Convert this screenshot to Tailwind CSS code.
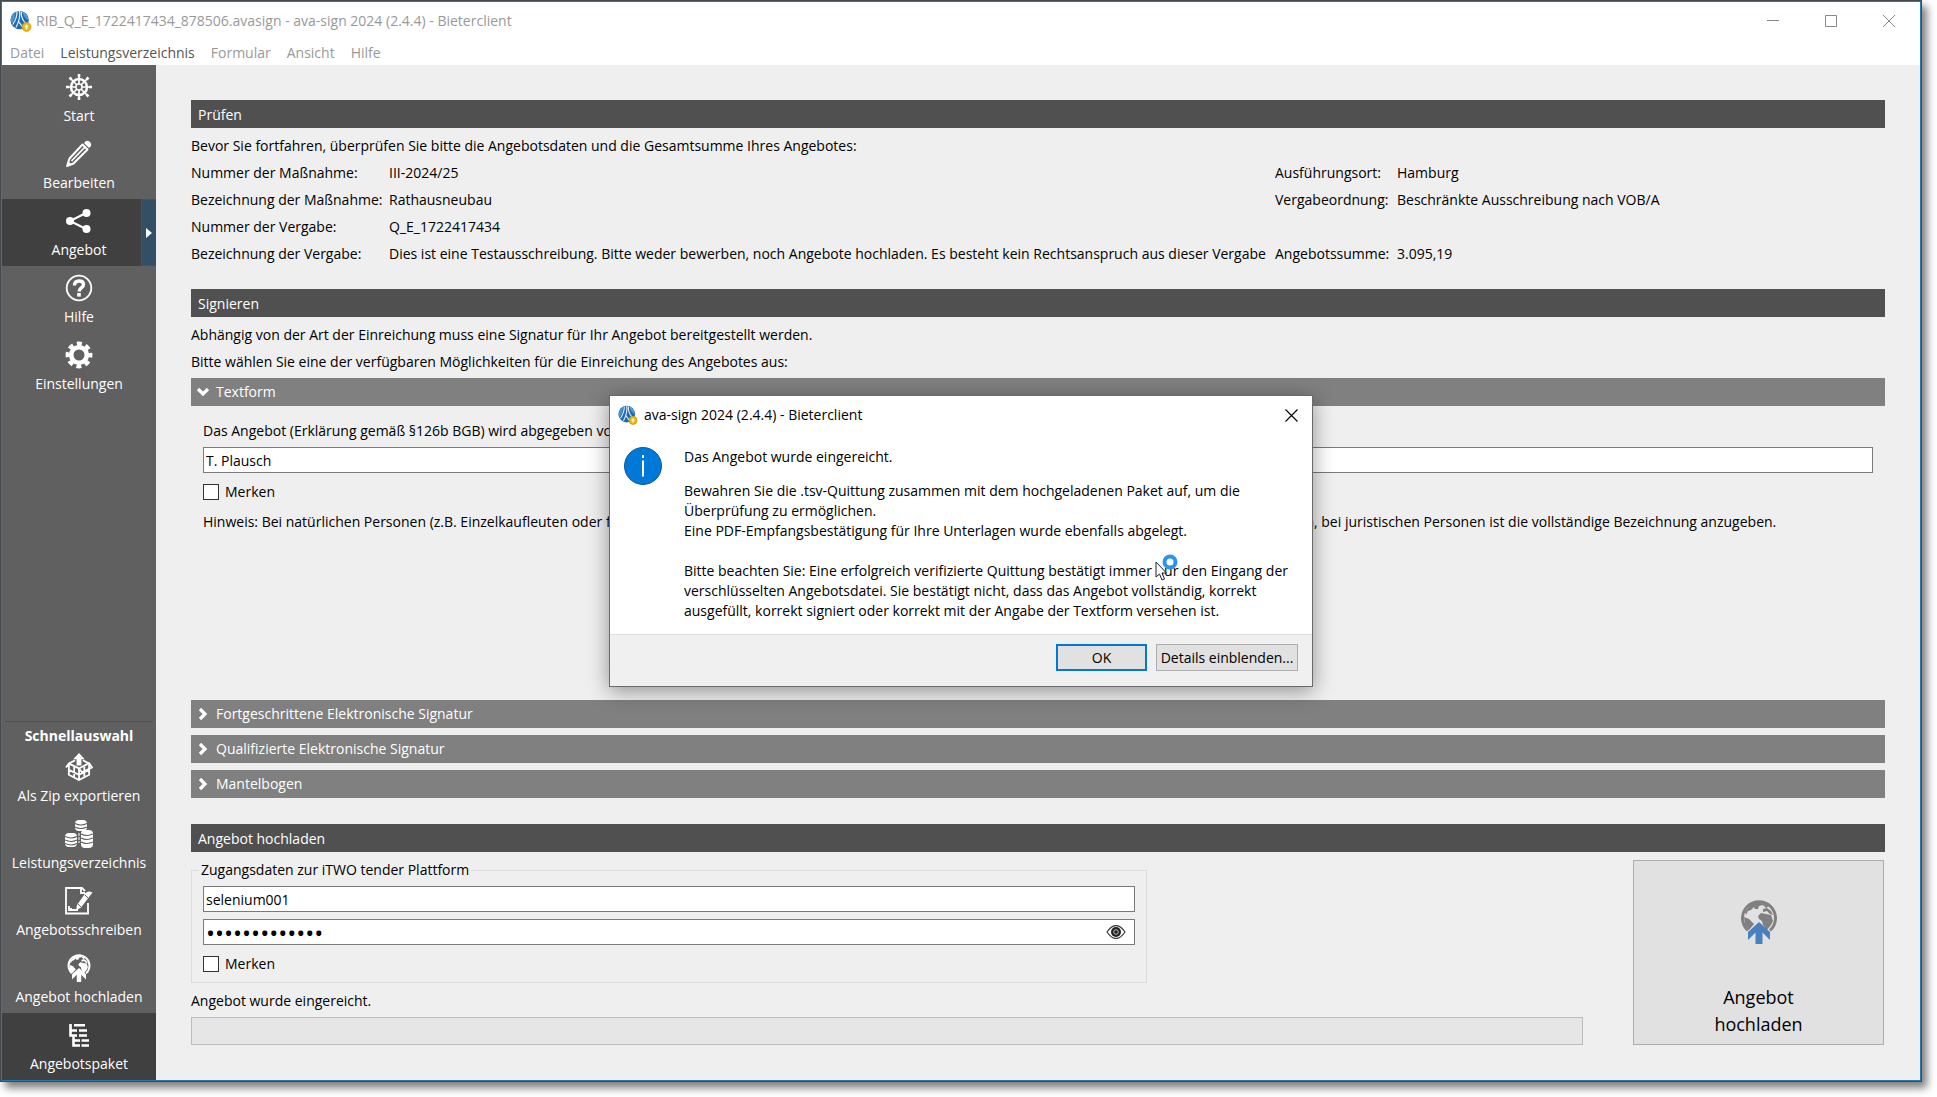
<!DOCTYPE html>
<html lang="de">
<head>
<meta charset="utf-8">
<title>ava-sign 2024 (2.4.4) - Bieterclient</title>
<script src="https://cdn.jsdelivr.net/npm/@tailwindcss/browser@4"></script>
</head>
<body class="flex min-h-screen flex-col bg-white pr-[15px] pb-[15px] font-['Open_Sans','Noto_Sans',sans-serif] text-[14px] leading-5 text-black">

<svg class="hidden" aria-hidden="true">
  <symbol id="logo" viewBox="0 0 24 24">
    <circle cx="10.500" cy="11" r="10" fill="#1f69b3"/>
    <path d="M1.500 7Q3 3 6 2L5 9 2 15Q0 11 1.500 7z" fill="#4f93d2"/>
    <path d="M13 1.500q4 1 6 5l1 5-4-4z" fill="#5a9ad6"/>
    <path d="M7.500 2Q8 8 3 16M10.500 1q1 9-4 18M12.500 2q-1 7 5 13M9 12l5 7" fill="none" stroke="#e8f1fa" stroke-width="1.300"/>
    <circle cx="18" cy="18.500" r="4.800" fill="#e8ba18" stroke="#c99a08"/>
    <path d="M18 15.500l2.500 3H19v2.500h-2v-2.500h-1.500z" fill="#fff4b8"/>
  </symbol>
  <symbol id="globe" viewBox="0 0 36 44">
    <path d="M7 30.500A16.500 16.500 0 1 1 29 30.500" fill="none" stroke="currentColor" stroke-width="3"/>
    <path d="M4 12l6-8 8-2 10 4-3 2-3-3-4 1-1 3h-3l-1-2-3 3-3 1-2 4z" fill="currentColor"/>
    <path d="M22 9l4-1 4 3 2 4-3-1-3-3-4 1z" fill="currentColor"/>
    <path d="M17 16l3-3 5 1 5 1 2 6-2 4-4 5-4-5-1-4-3-2z" fill="currentColor"/>
    <path d="M3 17l5 2 5 5-5 6-4-5z" fill="currentColor"/>
  </symbol>
  <symbol id="up-arrow" viewBox="0 0 36 44">
    <path d="M18 22l11 10v8l-7.500-7.500V44h-7V32.500L7 40v-8z" fill="currentColor"/>
  </symbol>
  <symbol id="chevron" viewBox="0 0 10 14"><path d="M2 2l5 5-5 5" fill="none" stroke="#fff" stroke-width="3.200"/></symbol>
</svg>

<div class="relative flex flex-1 flex-col border border-[#444b50] shadow-[5px_6px_8px_rgba(0,0,0,0.5)]">
 <div class="flex flex-1 flex-col border border-[#2a78a8] bg-[#efefef]">

  <header class="bg-white text-[#999999]">
    <div class="flex h-[37px] items-center">
      <svg class="ml-2 size-[22px]"><use href="#logo"/></svg>
      <h1 class="ml-1 flex-1">RIB_Q_E_1722417434_878506.avasign - ava-sign 2024 (2.4.4) - Bieterclient</h1>
      <button class="flex w-[58px] justify-center" aria-label="Minimieren"><svg class="size-3" viewBox="0 0 12 12" fill="none" stroke="#888"><path d="M0 5.500h12"/></svg></button>
      <button class="flex w-[58px] justify-center" aria-label="Maximieren"><svg class="size-3" viewBox="0 0 12 12" fill="none" stroke="#888"><path d="M.5.500h11v11H.5z"/></svg></button>
      <button class="mr-[2px] flex w-[58px] justify-center" aria-label="Schließen"><svg class="size-3" viewBox="0 0 12 12" fill="none" stroke="#888"><path d="M0 0l12 12M12 0L0 12"/></svg></button>
    </div>
    <nav class="flex h-[26px] gap-4 pl-2 leading-7">
      <a href="#">Datei</a><a href="#" class="text-[#555]">Leistungsverzeichnis</a><a href="#">Formular</a><a href="#">Ansicht</a><a href="#">Hilfe</a>
    </nav>
  </header>

  <div class="flex flex-1">
    <aside class="flex w-[154px] shrink-0 flex-col bg-[#606060] text-white">
      <a href="#" class="flex h-[67px] flex-col items-center gap-[5px] pt-2">
        <svg class="size-7" viewBox="0 0 28 28" fill="none" stroke="#fff"><circle cx="14" cy="14" r="8" stroke-width="2.500"/><circle cx="14" cy="14" r="3" stroke-width="1.500"/><path stroke-width="1.700" d="M14 1v10M14 17v10M1 14h10M17 14h10M5 5l7 7M16 16l7 7M23 5l-7 7M12 16l-7 7"/><path stroke-width="2.600" d="M14 1v3M14 24v3M1 14h3M24 14h3M4.500 4.500l2 2M21.500 21.500l2 2M23.500 4.500l-2 2M6.500 21.500l-2 2"/></svg>
        Start</a>
      <a href="#" class="flex h-[67px] flex-col items-center gap-[5px] pt-2">
        <svg class="size-7" viewBox="0 0 28 28"><path d="M19 3l2-2q2-1 4 1t1 4l-2 2z" fill="#fff"/><path d="M17.500 4.500l5 5L8.500 23.500l-6.500 2.500 2.500-7.500z" fill="none" stroke="#fff" stroke-width="2" stroke-linejoin="round"/><path d="M20 7L6.500 21" stroke="#fff" stroke-width="1.800"/><path d="M2 26l1.500-4.500 3 3z" fill="#fff"/></svg>
        Bearbeiten</a>
      <a href="#" class="relative flex h-[67px] flex-col items-center gap-[5px] bg-[#404040] pt-2">
        <svg class="size-7" viewBox="0 0 28 28"><path d="M21 6L5 14l16 8" fill="none" stroke="#fff" stroke-width="2"/><circle cx="21.500" cy="6" r="4" fill="#fff"/><circle cx="5" cy="14" r="4" fill="#fff"/><circle cx="21.500" cy="22" r="4" fill="#fff"/></svg>
        Angebot
        <span class="absolute inset-y-0 right-0 flex w-[15px] items-center justify-center border border-r-0 border-[#245b8d] bg-[#334f66]"><svg class="h-[10px] w-[6px]" viewBox="0 0 6 10"><path d="M0 0l6 5-6 5z" fill="#fff"/></svg></span></a>
      <a href="#" class="flex h-[67px] flex-col items-center gap-[5px] pt-2">
        <svg class="size-7" viewBox="0 0 28 28" fill="none" stroke="#fff"><circle cx="14" cy="14" r="12.300" stroke-width="1.800"/><path d="M9.500 11.500q0-4.500 4.500-4.500t4.500 3.500q0 2-2 3.200T14 17.500" stroke-width="3.400"/><path d="M14 19v3.600" stroke-width="3.600"/></svg>
        Hilfe</a>
      <a href="#" class="flex h-[67px] flex-col items-center gap-[5px] pt-2">
        <svg class="size-7" viewBox="0 0 28 28" fill="none" stroke="#fff"><circle cx="14" cy="14" r="7.800" stroke-width="4.600"/><circle cx="14" cy="14" r="11.400" stroke-width="4" stroke-dasharray="5 3.953" stroke-dashoffset="2.500"/></svg>
        Einstellungen</a>

      <div class="mx-[3px] mt-auto border-t border-[#505050] pt-1 text-center leading-[19px] font-bold">Schnellauswahl</div>
      <a href="#" class="flex h-[67px] flex-col items-center gap-[5px] pt-2">
        <svg class="size-7" viewBox="0 0 28 29" fill="none" stroke="#fff" stroke-width="1.900"><path d="M3.500 12v10.500L14 28l10.500-5.500V12M14 16v12M3.500 17.500L14 22.500l10.500-5M9 14v11M19.500 14v11"/><path d="M14 16L3.500 11l-3 4M14 16l10.500-5.500L27.500 15 17 20z" stroke-linejoin="round"/><path d="M3.500 11L10 7.500M24.500 11L18 7.500"/><path d="M14 0l6 6.500h-3.500V13h-5V6.500H8z" fill="#fff" stroke="none"/></svg>
        Als Zip exportieren</a>
      <a href="#" class="flex h-[67px] flex-col items-center gap-[5px] pt-2">
        <svg class="size-7" viewBox="0 0 28 28"><g fill="#fff"><rect x="10" y="0" width="12" height="11" rx="4"/><rect x="0" y="13" width="12" height="14" rx="4"/><rect x="16" y="10" width="12" height="18" rx="4"/></g><path d="M10 3.500q6 3 12 0M10 7q6 3 12 0M0 16.500q6 3 12 0M0 20q6 3 12 0M0 23.500q6 3 12 0M16 14q6 3 12 0M16 18q6 3 12 0M16 22q6 3 12 0" fill="none" stroke="#606060" stroke-width="1.100"/><path d="M14 13v10" stroke="#fff" stroke-dasharray="3 1"/></svg>
        Leistungsverzeichnis</a>
      <a href="#" class="flex h-[67px] flex-col items-center gap-[5px] pt-2">
        <svg class="size-7" viewBox="0 0 28 28" fill="none" stroke="#fff" stroke-width="1.800"><path d="M23 16v10.500H1V1h16l3 3M23 7v3"/><path d="M16 1v5h4"/><path d="M12 18l8.500-12q2-2 4-1.500l3 1L16 20.500l-5 3z" fill="#fff" stroke="none"/><path d="M20 8l4 4M13 17l3 3" stroke="#606060" stroke-width="1"/><path d="M4 19v4h2v-2 2h2v-1 1h5"/></svg>
        Angebotsschreiben</a>
      <a href="#" class="flex h-[67px] flex-col items-center gap-[5px] pt-2">
        <span class="relative h-7 w-6"><svg class="absolute inset-0 h-7 w-6"><use href="#globe"/></svg><svg class="absolute inset-0 h-7 w-6"><use href="#up-arrow"/></svg></span>
        Angebot hochladen</a>
      <a href="#" class="flex h-[67px] flex-col items-center gap-[5px] bg-[#404040] pt-2">
        <svg class="size-7" viewBox="0 0 28 28" fill="none" stroke="#fff" stroke-width="2.600"><path d="M9 4.300h11M5.500 3v11.500H12M5.500 9.500H12M14 9.500h8M14 14.500h8M8.500 14v10.500H15M8.500 19.500H15M16.500 19.500H24M16.500 24.500H24"/></svg>
        Angebotspaket</a>
    </aside>

    <main class="flex min-w-0 flex-1 flex-col p-[35px] whitespace-nowrap">
      <section>
        <h2 class="h-7 bg-[#505050] pl-[7px] leading-[30px] text-white">Prüfen</h2>
        <p class="mt-1 leading-[27px]">Bevor Sie fortfahren, überprüfen Sie bitte die Angebotsdaten und die Gesamtsumme Ihres Angebotes:</p>
        <dl class="grid grid-cols-[198px_886fr_122px_488fr] leading-[27px]">
          <dt>Nummer der Maßnahme:</dt><dd>III-2024/25</dd><dt>Ausführungsort:</dt><dd>Hamburg</dd>
          <dt>Bezeichnung der Maßnahme:</dt><dd>Rathausneubau</dd><dt>Vergabeordnung:</dt><dd>Beschränkte Ausschreibung nach VOB/A</dd>
          <dt>Nummer der Vergabe:</dt><dd class="col-span-3">Q_E_1722417434</dd>
          <dt>Bezeichnung der Vergabe:</dt><dd>Dies ist eine Testausschreibung. Bitte weder bewerben, noch Angebote hochladen. Es besteht kein Rechtsanspruch aus dieser Vergabe</dd><dt>Angebotssumme:</dt><dd>3.095,19</dd>
        </dl>
      </section>

      <section class="mt-[22px] flex flex-1 flex-col">
        <h2 class="h-7 bg-[#505050] pl-[7px] leading-[30px] text-white">Signieren</h2>
        <p class="mt-1 leading-[27px]">Abhängig von der Art der Einreichung muss eine Signatur für Ihr Angebot bereitgestellt werden.</p>
        <p class="leading-[27px]">Bitte wählen Sie eine der verfügbaren Möglichkeiten für die Einreichung des Angebotes aus:</p>
        <button class="mt-[3px] flex h-7 items-center gap-2 bg-[#808080] pl-[7px] leading-[30px] text-white"><svg class="h-[14px] w-[10px] rotate-90"><use href="#chevron"/></svg>Textform</button>
        <div class="flex flex-1 flex-col px-3 pt-[11px]">
          <label for="signer" class="leading-[27px]">Das Angebot (Erklärung gemäß §126b BGB) wird abgegeben von:</label>
          <input id="signer" type="text" value="T. Plausch" class="mt-[3px] h-[26px] w-full border border-[#7a7a7a] bg-white px-[2px]">
          <label class="mt-[9px] flex items-center gap-[6px]"><input type="checkbox" class="size-4 appearance-none border border-[#333] bg-white">Merken</label>
          <p class="mt-[6px] leading-[27px]">Hinweis: Bei natürlichen Personen (z.B. Einzelkaufleuten oder freiberuflich Tätigen) ist der vollständige Vor- und Nachname der erklärenden natürlichen Person anzugeben, bei juristischen Personen ist die vollständige Bezeichnung anzugeben.</p>
        </div>
        <div class="flex flex-col gap-[7px] leading-[30px] text-white">
          <button class="flex h-7 items-center gap-2 bg-[#808080] pl-[7px]"><svg class="h-[14px] w-[10px]"><use href="#chevron"/></svg>Fortgeschrittene Elektronische Signatur</button>
          <button class="flex h-7 items-center gap-2 bg-[#808080] pl-[7px]"><svg class="h-[14px] w-[10px]"><use href="#chevron"/></svg>Qualifizierte Elektronische Signatur</button>
          <button class="flex h-7 items-center gap-2 bg-[#808080] pl-[7px]"><svg class="h-[14px] w-[10px]"><use href="#chevron"/></svg>Mantelbogen</button>
        </div>
      </section>

      <section class="mt-[26px]">
        <h2 class="h-7 bg-[#505050] pl-[7px] leading-[30px] text-white">Angebot hochladen</h2>
        <div class="flex gap-[50px] pt-2 pr-px">
          <div class="grid flex-1 grid-cols-[239fr_109fr]">
            <fieldset class="flex flex-col border border-[#dcdcdc] px-[11px] pb-2">
              <legend class="-ml-1 px-[2px]">Zugangsdaten zur iTWO tender Plattform</legend>
              <input type="text" aria-label="Benutzername" value="selenium001" class="mt-[6px] h-[26px] border border-[#7a7a7a] bg-white px-[2px]">
              <div class="mt-[7px] flex h-[26px] items-center border border-[#7a7a7a] bg-white pr-2">
                <input type="password" aria-label="Passwort" value="*************" class="h-6 flex-1 px-[2px] text-[24px] leading-6">
                <button aria-label="Passwort anzeigen"><svg class="h-[14px] w-5" viewBox="0 0 20 14"><path d="M1 7q9-13 18 0-9 13-18 0z" fill="none" stroke="#444" stroke-width="1.300"/><circle cx="10" cy="7" r="5" fill="#222"/><circle cx="10" cy="7" r="2.300" fill="none" stroke="#bbb"/></svg></button>
              </div>
              <label class="mt-[9px] flex items-center gap-[6px]"><input type="checkbox" class="size-4 appearance-none border border-[#333] bg-white">Merken</label>
            </fieldset>
            <p class="col-span-2 mt-1 leading-[27px]" id="state">Angebot wurde eingereicht.</p>
            <div role="progressbar" aria-labelledby="state" class="col-span-2 mt-[3px] h-7 border border-[#bcbcbc] bg-[#e6e6e6]"></div>
          </div>
          <button class="flex w-[251px] flex-col items-center justify-end border border-[#adadad] bg-[#e1e1e1] pb-[6px] text-[18px] leading-[27px]">
            <span class="relative mb-[40px] h-11 w-9"><svg class="absolute inset-0 h-11 w-9 text-[#808080]"><use href="#globe"/></svg><svg class="absolute inset-0 h-11 w-9 text-[#4a80bd]"><use href="#up-arrow"/></svg></span>
            <span>Angebot<br>hochladen</span>
          </button>
        </div>
      </section>
    </main>
  </div>
 </div>

 <div class="absolute inset-0 flex items-center justify-center">
  <div role="dialog" aria-labelledby="dlg-title" class="relative w-[704px] border border-[#6a6a6a] bg-white shadow-[0_4px_20px_rgba(0,0,0,0.4)]">
    <div class="flex h-[38px] items-center pr-[14px] pl-2">
      <svg class="size-5"><use href="#logo"/></svg>
      <h2 id="dlg-title" class="ml-[6px] flex-1">ava-sign 2024 (2.4.4) - Bieterclient</h2>
      <button aria-label="Schließen"><svg class="size-[13px]" viewBox="0 0 13 13"><path d="M.5.500l12 12M12.500.500l-12 12" stroke="#000" stroke-width="1.100"/></svg></button>
    </div>
    <div class="flex gap-[22px] pt-[13px] pb-[13px] pl-[14px]">
      <svg class="size-[38px]" viewBox="0 0 38 38"><circle cx="19" cy="19" r="18.500" fill="#0078d7" stroke="#0a5ba3"/><path d="M19 8v3M19 13.500v16" stroke="#fff" stroke-width="2"/></svg>
      <div class="whitespace-nowrap">
        <p>Das Angebot wurde eingereicht.</p>
        <p class="mt-[14px]">Bewahren Sie die .tsv-Quittung zusammen mit dem hochgeladenen Paket auf, um die<br>Überprüfung zu ermöglichen.<br>Eine PDF-Empfangsbestätigung für Ihre Unterlagen wurde ebenfalls abgelegt.</p>
        <p class="mt-5">Bitte beachten Sie: Eine erfolgreich verifizierte Quittung bestätigt immer nur den Eingang der<br>verschlüsselten Angebotsdatei. Sie bestätigt nicht, dass das Angebot vollständig, korrekt<br>ausgefüllt, korrekt signiert oder korrekt mit der Angabe der Textform versehen ist.</p>
      </div>
    </div>
    <div class="flex justify-end gap-[9px] border-t border-[#dfdfdf] bg-[#f0f0f0] pt-[9px] pr-[14px] pb-[15px]">
      <button class="h-[27px] w-[91px] border-2 border-[#0078d7] bg-[#e1e1e1]">OK</button>
      <button class="h-[27px] w-[142px] border border-[#adadad] bg-[#e1e1e1] whitespace-nowrap">Details einblenden...</button>
    </div>
    <svg class="absolute top-[158px] left-[545px] h-[28px] w-[24px]" viewBox="0 0 24 28"><circle cx="15" cy="8" r="5.500" fill="#fff" stroke="#2a94f4" stroke-width="4"/><path d="M1 8v15l3.500-3 2.500 6 2.500-1-2.500-6h4.500z" fill="#fff" stroke="#223" stroke-width="1"/></svg>
  </div>
 </div>
</div>
</body>
</html>
